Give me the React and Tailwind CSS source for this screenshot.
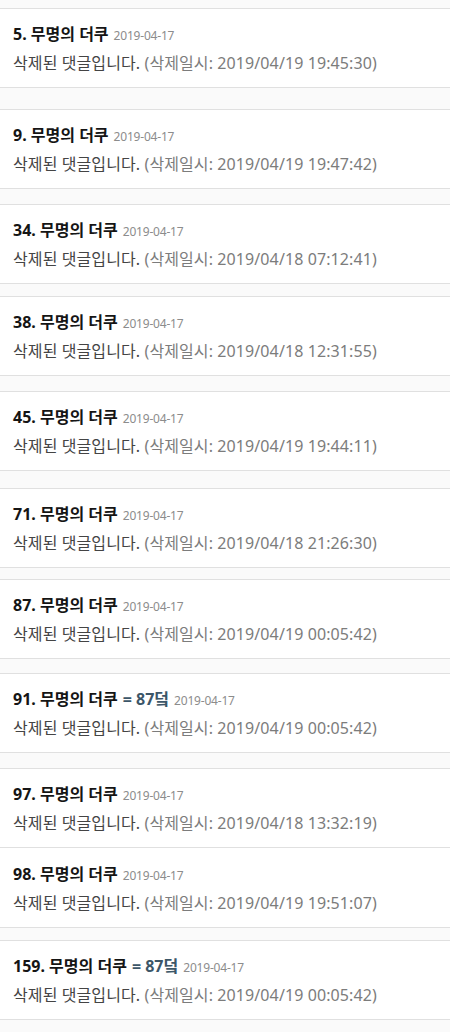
const comments = [
  { no: 5, tag: null, deletedAt: "2019/04/19 19:45:30", gap: "mt-0" },
  { no: 9, tag: null, deletedAt: "2019/04/19 19:47:42", gap: "mt-[21px]" },
  { no: 34, tag: null, deletedAt: "2019/04/18 07:12:41", gap: "mt-[15px]" },
  { no: 38, tag: null, deletedAt: "2019/04/18 12:31:55", gap: "mt-[12px]" },
  { no: 45, tag: null, deletedAt: "2019/04/19 19:44:11", gap: "mt-[15px]" },
  { no: 71, tag: null, deletedAt: "2019/04/18 21:26:30", gap: "mt-[17px]" },
  { no: 87, tag: null, deletedAt: "2019/04/19 00:05:42", gap: "mt-[11px]" },
  { no: 91, tag: "87덬", deletedAt: "2019/04/19 00:05:42", gap: "mt-[14px]" },
  { no: 97, tag: null, deletedAt: "2019/04/18 13:32:19", gap: "mt-[15px]" },
  { no: 98, tag: null, deletedAt: "2019/04/19 19:51:07", gap: "mt-0", joined: true },
  { no: 159, tag: "87덬", deletedAt: "2019/04/19 00:05:42", gap: "mt-[12px]" },
];

function DeletedComment({ no, tag, deletedAt, gap, joined }) {
  return (
    <div
      className={
        gap +
        " bg-white border-b border-[#e0e0e0] px-[13px] pb-[13px] " +
        (joined ? "pt-[16px]" : "border-t pt-[15px]")
      }
    >
      <div className="flex items-baseline gap-[5px] h-[20px] leading-[20px]">
        <span className="text-[16px] font-bold text-[#151515]">
          {no}. 무명의 더쿠
        </span>
        {tag && (
          <span className="text-[16px] font-bold text-[#3c5668]">
            = {tag}
          </span>
        )}
        <span className="text-[12px] text-[#8c8c8c] tracking-[-0.2px]">2019-04-17</span>
      </div>
      <div className="mt-[8px] h-[22px] leading-[22px] text-[16px] tracking-[0.1px]">
        <span className="text-[#444]">삭제된 댓글입니다.</span>{" "}
        <span className="text-[#7c7c7c]">(삭제일시: {deletedAt})</span>
      </div>
    </div>
  );
}

export default function App() {
  return (
    <div
      className="w-[450px] h-[1032px] overflow-hidden bg-[#fafafa] pt-[8px]"
      style={{ fontFamily: '"Noto Sans", "Noto Sans CJK KR", sans-serif' }}
    >
      {comments.map((c) => (
        <DeletedComment key={c.no} {...c} />
      ))}
    </div>
  );
}
